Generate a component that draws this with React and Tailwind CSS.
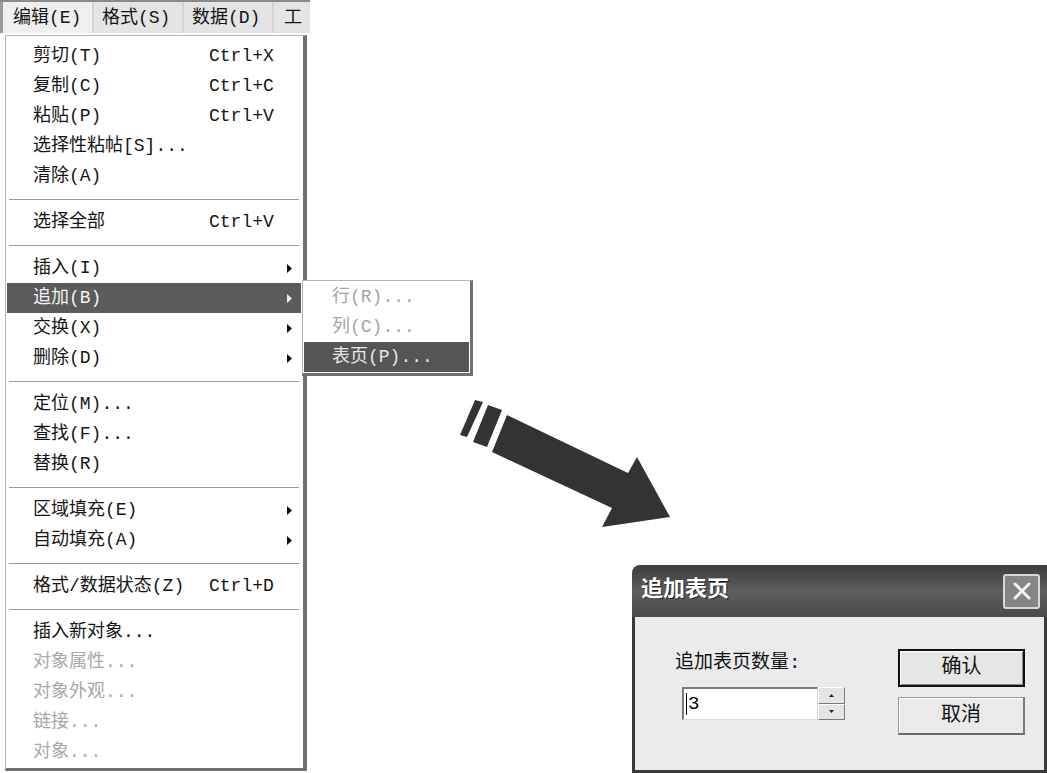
import React from "react";

const menuItems = [
  { label: "剪切(T)", shortcut: "Ctrl+X" },
  { label: "复制(C)", shortcut: "Ctrl+C" },
  { label: "粘贴(P)", shortcut: "Ctrl+V" },
  { label: "选择性粘帖[S]..." },
  { label: "清除(A)" },
  "sep",
  { label: "选择全部", shortcut: "Ctrl+V" },
  "sep",
  { label: "插入(I)", sub: true },
  { label: "追加(B)", sub: true, active: true },
  { label: "交换(X)", sub: true },
  { label: "删除(D)", sub: true },
  "sep",
  { label: "定位(M)..." },
  { label: "查找(F)..." },
  { label: "替换(R)" },
  "sep",
  { label: "区域填充(E)", sub: true },
  { label: "自动填充(A)", sub: true },
  "sep",
  { label: "格式/数据状态(Z)", shortcut: "Ctrl+D" },
  "sep",
  { label: "插入新对象..." },
  { label: "对象属性...", disabled: true },
  { label: "对象外观...", disabled: true },
  { label: "链接...", disabled: true },
  { label: "对象...", disabled: true },
];

const subItems = [
  { label: "行(R)...", disabled: true },
  { label: "列(C)...", disabled: true },
  { label: "表页(P)...", active: true },
];

const SubArrow = ({ white }) => (
  <svg width="5" height="9" viewBox="0 0 5 9">
    <polygon points="0,0 5,4.5 0,9" fill={white ? "#eeeeee" : "#111111"} />
  </svg>
);

const MenuRow = ({ item }) => {
  const color = item.active
    ? "bg-[#5b5b5b] text-[#f2f2f2]"
    : item.disabled
    ? "text-[#a8a8a8]"
    : "text-[#151515]";
  return (
    <div className={`flex items-center h-[30px] pl-[26px] pr-[9px] leading-none ${color}`}>
      <span className="w-[176px] shrink-0 whitespace-nowrap">{item.label}</span>
      <span className="flex-1 whitespace-nowrap">{item.shortcut}</span>
      {item.sub && <SubArrow white={item.active} />}
    </div>
  );
};

const Separator = () => (
  <div className="h-[16px] flex items-center px-[2px]">
    <div className="w-full h-px bg-[#9a9a9a]" />
  </div>
);

const BigArrow = () => (
  <svg className="absolute left-[450px] top-[395px]" width="230" height="140" viewBox="450 395 230 140">
    <polygon points="475,400 483,402 467,437 460,435" fill="#333333" />
    <polygon points="488,405 502,410 487,447 473,442" fill="#333333" />
    <polygon points="507,415 628,473 637,457 670,517 602,527 612,508 492,452" fill="#333333" />
  </svg>
);

const SpinBtn = ({ up }) => (
  <div className="flex-1 flex items-center justify-center bg-[#e4e4e4] border-t border-l border-t-white border-l-white border-b border-r border-b-[#7a7a7a] border-r-[#7a7a7a]">
    <svg width="5" height="3" viewBox="0 0 5 3">
      <polygon points={up ? "2.5,0 5,3 0,3" : "0,0 5,0 2.5,3"} fill="#222" />
    </svg>
  </div>
);

const App = () => {
  return (
    <div className="relative w-[1047px] h-[773px] bg-white overflow-hidden font-['Liberation_Mono','Noto_Sans_CJK_SC',monospace] text-[18px]">
      {/* menu bar */}
      <div className="flex h-[33px] w-[310px] bg-[#d4d4d4] border-t-2 border-t-[#8a8a8a] leading-none text-[#151515]">
        <div className="w-[92px] flex items-center pl-[10px] bg-[#efefef] border-l-[3px] border-l-[#9a9a9a]">编辑(E)</div>
        <div className="w-[88px] ml-[2px] flex items-center pl-[8px] bg-[#e4e4e4]">格式(S)</div>
        <div className="w-[88px] ml-[2px] flex items-center pl-[8px] bg-[#e4e4e4]">数据(D)</div>
        <div className="flex-1 ml-[2px] flex items-center pl-[10px] bg-[#e4e4e4] whitespace-nowrap">工</div>
      </div>

      {/* dropdown */}
      <div className="ml-[5px] mt-[2px] w-[302px] bg-white border-l border-t border-[#b4b4b4] border-r-4 border-r-[#707070] border-b-[3px] border-b-[#707070] pl-px pr-[2px] pt-[5px] pb-[1px]">
        {menuItems.map((item, i) =>
          item === "sep" ? <Separator key={i} /> : <MenuRow key={i} item={item} />
        )}
      </div>

      {/* submenu */}
      <div className="absolute left-[302px] top-[280px] w-[171px] bg-white border-l border-t border-[#b4b4b4] border-r-[3px] border-r-[#707070] border-b-[3px] border-b-[#707070] p-px">
        {subItems.map((item, i) => (
          <div
            key={i}
            className={`flex items-center h-[30px] pl-[28px] leading-none whitespace-nowrap ${
              item.active ? "bg-[#555555] text-[#e6e6e6]" : "text-[#a4a4a4]"
            }`}
          >
            {item.label}
          </div>
        ))}
      </div>

      <BigArrow />

      {/* dialog window */}
      <div className="absolute left-[632px] top-[565px] w-[415px] h-[208px] flex flex-col">
        <div className="h-[52px] flex items-center justify-between pl-[9px] pr-[7px] rounded-tl-[8px] bg-gradient-to-b from-[#3c3c3c] via-[#5e5e5e] to-[#4a4a4a]">
          <span className="text-[22px] font-bold text-white leading-none [text-shadow:1px_1px_0_#222]">追加表页</span>
          <div className="w-[37px] h-[35px] flex items-center justify-center rounded-[3px] border-2 border-[#d8d8d8] bg-[#858585]">
            <svg width="20" height="20" viewBox="0 0 20 20">
              <path d="M3 3 L17 17 M17 3 L3 17" stroke="#f4f4f4" strokeWidth="3" strokeLinecap="round" />
            </svg>
          </div>
        </div>
        <div className="flex-1 flex bg-[#ebebeb] border-l-[3px] border-r-[3px] border-b-[3px] border-[#3a3a3a]">
          <div className="w-[263px] pl-[40px] pt-[33px]">
            <div className="h-[26px] leading-[26px] text-[19px] text-[#111] whitespace-nowrap">追加表页数量:</div>
            <div className="flex mt-[11px] ml-[7px]">
              <div className="w-[136px] h-[33px] bg-white border-t-2 border-l-2 border-[#7c7c7c] border-b border-r border-b-[#dcdcdc] border-r-[#dcdcdc] flex items-center pl-[2px] leading-none">
                <span className="w-px h-[22px] bg-black mr-[1px]" />
                <span className="text-[19px] text-black">3</span>
              </div>
              <div className="w-[27px] h-[33px] flex flex-col">
                <SpinBtn up />
                <SpinBtn />
              </div>
            </div>
          </div>
          <div className="w-[127px] pt-[32px] flex flex-col">
            <button className="h-[38px] border-2 border-[#111] bg-[#e6e6e6] text-[20px] text-[#111] leading-none shadow-[inset_1px_1px_0_#fff,inset_-1px_-1px_0_#888]">确认</button>
            <button className="h-[38px] mt-[10px] border border-[#9a9a9a] border-b-2 border-b-[#6a6a6a] border-r-2 border-r-[#7a7a7a] bg-[#eaeaea] text-[20px] text-[#111] leading-none shadow-[inset_1px_1px_0_#fff]">取消</button>
          </div>
        </div>
      </div>
    </div>
  );
};

export default App;
